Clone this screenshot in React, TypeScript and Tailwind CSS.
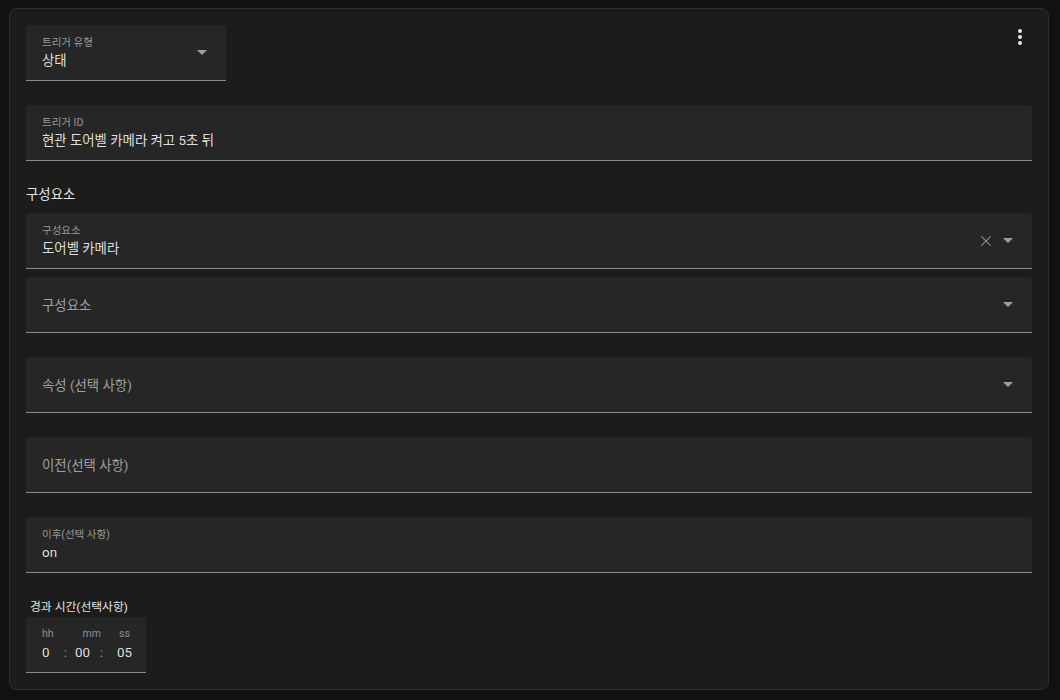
import { X } from "lucide-react";

const font = "font-['Roboto','Noto_Sans_CJK_KR',sans-serif]";

function Caret() {
  return (
    <svg width="10" height="5" viewBox="0 0 10 5" className="shrink-0">
      <path d="M0 0 L10 0 L5 5 Z" fill="#9e9e9e" />
    </svg>
  );
}

function Field({
  label,
  value,
  caret,
  clear,
  className = "",
}: {
  label: string;
  value?: string;
  caret?: boolean;
  clear?: boolean;
  className?: string;
}) {
  return (
    <div
      className={`relative h-[56px] rounded-t-[4px] bg-[#262626] border-b border-[#8a8a8a] flex items-center pl-4 pr-[19px] ${className}`}
    >
      <div className="flex-1 min-w-0">
        {value ? (
          <div className="flex flex-col">
            <span className="text-[10.5px] leading-[14px] text-[#9a9a9a] mt-[1px]">{label}</span>
            <span className="text-[13.4px] leading-[20px] text-[#dedede] mt-[1px]">{value}</span>
          </div>
        ) : (
          <span className="text-[13.4px] leading-[20px] text-[#a0a0a0]">{label}</span>
        )}
      </div>
      {clear && <X size={18} strokeWidth={1.4} className="text-[#9e9e9e] mr-[8px]" />}
      {caret && <Caret />}
    </div>
  );
}

function Duration() {
  return (
    <div className="w-[120px] h-[56px] bg-[#262626] border-b border-[#8a8a8a] flex pl-4 pt-[10px] text-[#dedede]">
      <div className="flex flex-col w-[22px]">
        <span className="text-[10.5px] leading-[14px] text-[#8f8f8f]">hh</span>
        <span className="text-[13.4px] leading-[22px] mt-[1px]">0</span>
      </div>
      <span className="text-[12px] text-[#9a9a9a] mt-[15px] leading-[22px] w-[11px]">:</span>
      <div className="flex flex-col items-start w-[25px] relative">
        <span className="text-[10.5px] leading-[14px] text-[#8f8f8f] self-end -mr-[1px]">mm</span>
        <span className="text-[13.4px] leading-[22px] mt-[1px]">00</span>
      </div>
      <span className="text-[12px] text-[#9a9a9a] mt-[15px] leading-[22px] w-[17px]">:</span>
      <div className="flex flex-col items-center w-[15px]">
        <span className="text-[10.5px] leading-[14px] text-[#8f8f8f]">ss</span>
        <span className="text-[13.4px] leading-[22px] mt-[1px]">05</span>
      </div>
    </div>
  );
}

export default function App() {
  return (
    <div className={`w-[1060px] h-[700px] bg-[#111111] pt-2 pl-[9px] ${font}`}>
      <div className="w-[1040px] h-[682px] rounded-lg border border-[#2f2f2f] bg-[#1c1c1c] p-4">
        <div className="flex justify-between">
          <Field label="트리거 유형" value="상태" caret className="w-[200px]" />
          <div className="flex flex-col gap-[2px] pt-[4px] pr-[10px]">
            <span className="w-[4px] h-[4px] rounded-full bg-[#e6e6e6]" />
            <span className="w-[4px] h-[4px] rounded-full bg-[#e6e6e6]" />
            <span className="w-[4px] h-[4px] rounded-full bg-[#e6e6e6]" />
          </div>
        </div>
        <Field label="트리거 ID" value="현관 도어벨 카메라 켜고 5초 뒤" className="mt-6" />
        <div className="mt-6 h-[20px] text-[13.4px] leading-[20px] text-[#e3e3e3]">구성요소</div>
        <Field label="구성요소" value="도어벨 카메라" caret clear className="mt-2" />
        <Field label="구성요소" caret className="mt-2" />
        <Field label="속성 (선택 사항)" caret className="mt-6" />
        <Field label="이전(선택 사항)" className="mt-6" />
        <Field label="이후(선택 사항)" value="on" className="mt-6" />
        <div className="mt-6 h-[20px] pl-1 text-[11.8px] leading-[20px] text-[#e3e3e3]">경과 시간(선택사항)</div>
        <Duration />
      </div>
    </div>
  );
}
